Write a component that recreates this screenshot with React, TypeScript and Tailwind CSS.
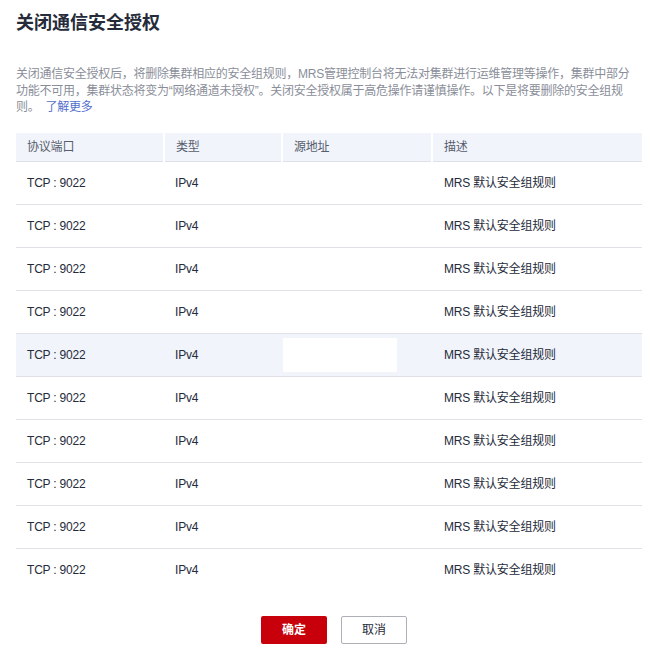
const rows = Array.from({ length: 10 }, (_, i) => ({
  id: i,
  port: 'TCP : 9022',
  type: 'IPv4',
  source: '',
  desc: 'MRS 默认安全组规则',
}));

export default function App() {
  return (
    <div
      className="w-[652px] h-[655px] bg-white px-4 pt-[10px] text-[#252b3a]"
      style={{ fontFamily: '"Liberation Sans", "Noto Sans CJK SC", sans-serif' }}
    >
      <h1 className="text-[18px] leading-[26px] font-bold text-[#252b3a]">关闭通信安全授权</h1>

      <p className="mt-[30px] text-[12px] leading-[16.5px] tracking-[-0.25px] text-[#8a8e99]">
        关闭通信安全授权后，将删除集群相应的安全组规则，MRS管理控制台将无法对集群进行运维管理等操作，集群中部分功能不可用，集群状态将变为“网络通道未授权”。关闭安全授权属于高危操作请谨慎操作。以下是将要删除的安全组规
        <br />
        则。
        <a className="ml-[6px] text-[#526ecc] cursor-pointer">了解更多</a>
      </p>

      <table className="mt-[17px] w-[626px] table-fixed border-collapse text-[12px] tracking-[-0.2px]">
        <colgroup>
          <col className="w-[148px]" />
          <col className="w-[118px]" />
          <col className="w-[150px]" />
          <col className="w-[210px]" />
        </colgroup>
        <thead>
          <tr className="h-[29px] bg-[#f1f4fb] border-b border-[#dfe1e6] text-[#575d6c]">
            <th className="text-left font-normal pl-[11px] border-r-2 border-white">协议端口</th>
            <th className="text-left font-normal pl-[11px] border-r-2 border-white">类型</th>
            <th className="text-left font-normal pl-[11px] border-r-2 border-white">源地址</th>
            <th className="text-left font-normal pl-[11px]">描述</th>
          </tr>
        </thead>
        <tbody>
          {rows.map((r, i) => {
            const hovered = i === 4;
            return (
              <tr
                key={r.id}
                className={`h-[43px] text-[#252b3a] ${i < rows.length - 1 ? 'border-b border-[#dfe1e6]' : ''} ${hovered ? 'bg-[#f1f4fb]' : ''}`}
              >
                <td className="pl-[11px]">{r.port}</td>
                <td className="pl-[11px]">{r.type}</td>
                <td className="p-0">
                  {hovered && <div className="ml-[1px] h-[34px] w-[114px] bg-white" />}
                </td>
                <td className="pl-[12px]">{r.desc}</td>
              </tr>
            );
          })}
        </tbody>
      </table>

      <div className="mt-6 flex justify-center gap-[14px] pl-[16px]">
        <button className="h-[28px] w-[66px] rounded-[2px] bg-[#c7000b] text-[12px] font-bold text-white">
          确定
        </button>
        <button className="h-[28px] w-[66px] rounded-[2px] border border-[#adb0b8] bg-white text-[12px] text-[#252b3a]">
          取消
        </button>
      </div>
    </div>
  );
}
